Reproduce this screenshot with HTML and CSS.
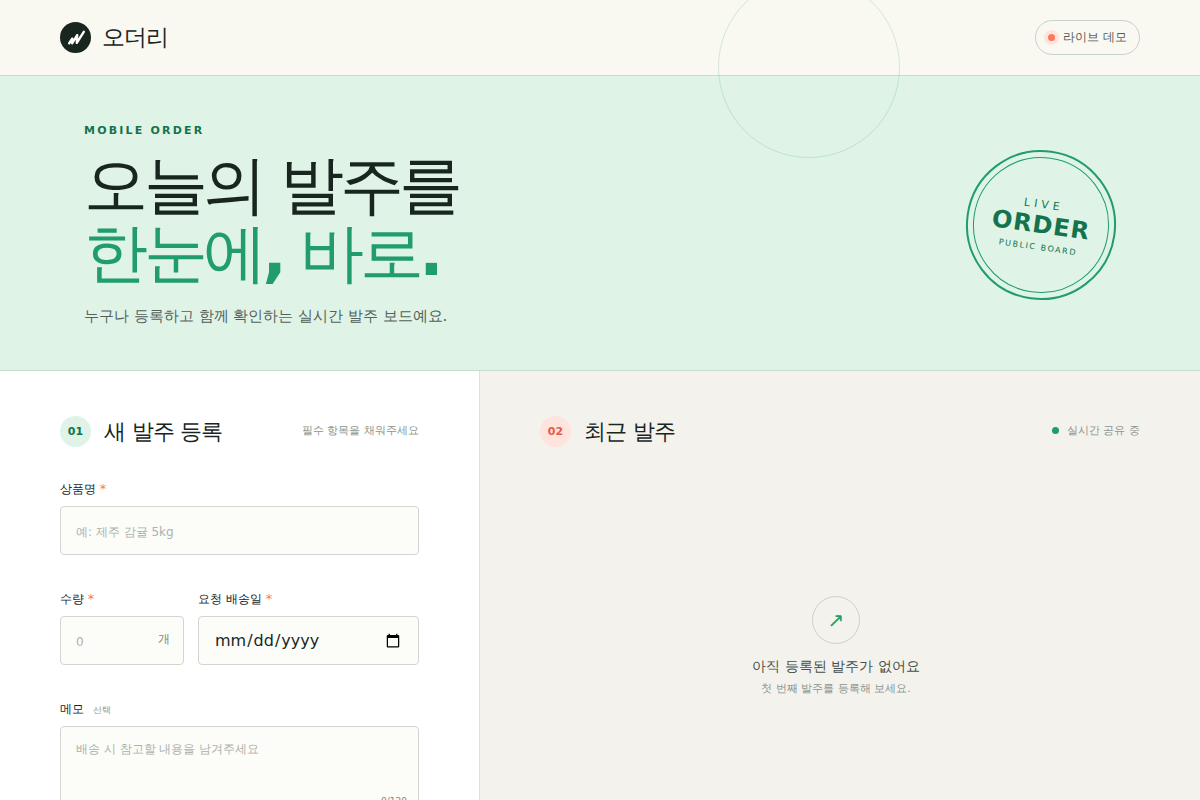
FILE: index.html
```html
<!doctype html>
<html lang="ko">
  <head>
    <meta charset="UTF-8" />
    <meta name="viewport" content="width=device-width, initial-scale=1.0" />
    <title>오더리</title>
    <link rel="stylesheet" href="styles.css">
  </head>
  <body>
    <header class="topbar">
      <a class="brand" href="#">
        <span class="brand-mark">
          <svg viewBox="0 0 31 31" aria-hidden="true">
            <path d="M9.200 21.200L12.200 16.800M12.200 21.200L17.200 13.200M12.200 16.800V21.200M17.200 13.200L16.800 20.800L23.800 9.800" />
          </svg>
        </span>
        <span class="brand-name">오더리</span>
      </a>
      <span class="live-pill"><i class="live-dot"></i>라이브 데모</span>
    </header>

    <section class="hero">
      <div class="hero-copy">
        <p class="eyebrow">MOBILE ORDER</p>
        <h1>오늘의 발주를<br /><em>한눈에, 바로.</em></h1>
        <p class="hero-text">누구나 등록하고 함께 확인하는 실시간 발주 보드예요.</p>
      </div>
      <div class="stamp">
        <span class="stamp-top">LIVE</span>
        <strong>ORDER</strong>
        <small>PUBLIC BOARD</small>
      </div>
    </section>

    <main class="workspace">
      <section class="panel form-panel">
        <div class="panel-head">
          <span class="step">01</span>
          <h2>새 발주 등록</h2>
          <p class="hint">필수 항목을 채워주세요</p>
        </div>
        <form>
          <div class="field">
            <label for="product">상품명 <b>*</b></label>
            <input type="text" id="product" placeholder="예: 제주 감귤 5kg" />
          </div>
          <div class="field-row">
            <div class="field">
              <label for="quantity">수량 <b>*</b></label>
              <div class="input-wrap">
                <input type="number" id="quantity" placeholder="0" />
                <span class="unit">개</span>
              </div>
            </div>
            <div class="field">
              <label for="date">요청 배송일 <b>*</b></label>
              <input type="date" id="date" />
            </div>
          </div>
          <div class="field">
            <label for="memo">메모 <small>선택</small></label>
            <div class="input-wrap">
              <textarea id="memo" maxlength="120" placeholder="배송 시 참고할 내용을 남겨주세요"></textarea>
              <span class="count">0/120</span>
            </div>
          </div>
        </form>
      </section>

      <section class="panel list-panel">
        <div class="panel-head">
          <span class="step step-coral">02</span>
          <h2>최근 발주</h2>
          <p class="sharing"><i></i>실시간 공유 중</p>
        </div>
        <div class="empty">
          <span class="empty-icon">↗</span>
          <strong>아직 등록된 발주가 없어요</strong>
          <p>첫 번째 발주를 등록해 보세요.</p>
        </div>
      </section>
    </main>
  </body>
</html>
```

FILE: styles.css
```css
:root {
  --ink: #18261f;
  --green: #209d6b;
  --deep: #14734d;
  --mint: #dff3e7;
  --coral: #ff765d;
  --line: #d0d6d0;
}

*,
*::before {
  box-sizing: border-box;
}

body {
  margin: 0;
  color: var(--ink);
  background: #f9f8f1;
  font-family: "DejaVu Sans", sans-serif;
  font-synthesis: none;
}

h1,
h2,
p {
  margin: 0;
}

.topbar {
  display: flex;
  align-items: center;
  justify-content: space-between;
  height: 76px;
  padding: 0 60px;
  border-bottom: 1px solid #cbdbd1;
}

.brand {
  display: flex;
  align-items: center;
  gap: 11px;
  color: inherit;
  text-decoration: none;
}

.brand-mark {
  width: 31px;
  height: 31px;
  border-radius: 50%;
  background: var(--ink);
}

.brand-mark svg {
  display: block;
  fill: none;
  stroke: #fff;
  stroke-width: 2.4;
  stroke-linecap: round;
  stroke-linejoin: round;
}

.brand-name {
  font-size: 23px;
  font-weight: 700;
  letter-spacing: -1px;
}

.live-pill {
  display: flex;
  align-items: center;
  gap: 8px;
  height: 35px;
  padding: 0 12px;
  border: 1px solid #c8d2ca;
  border-radius: 18px;
  color: #536159;
  font-size: 12px;
}

.live-dot {
  width: 7px;
  height: 7px;
  border-radius: 50%;
  background: var(--coral);
  box-shadow: 0 0 0 4px #fde5de;
}

.hero {
  position: relative;
  display: flex;
  align-items: center;
  justify-content: space-between;
  padding: 48px 84px 44px;
  background: var(--mint);
  border-bottom: 1px solid #c5dccf;
}

/* thin ring hanging over the header edge */
.hero::before {
  content: "";
  position: absolute;
  top: -100px;
  right: 25%;
  width: 182px;
  height: 182px;
  border: 1px solid rgba(32, 157, 107, 0.18);
  border-radius: 50%;
}

.eyebrow {
  color: var(--deep);
  font-size: 11px;
  font-weight: 700;
  letter-spacing: 0.2em;
}

h1 {
  margin: 14px 0 20px;
  font-size: 64px;
  line-height: 68px;
  letter-spacing: -0.07em;
}

h1 em {
  color: var(--green);
  font-style: normal;
}

.hero-text {
  color: #536159;
  font-size: 15px;
}

.stamp {
  position: relative;
  display: flex;
  flex-direction: column;
  align-items: center;
  justify-content: center;
  width: 150px;
  height: 150px;
  border: 2px solid var(--green);
  border-radius: 50%;
  color: var(--deep);
  transform: rotate(8deg);
}

.stamp::before {
  content: "";
  position: absolute;
  inset: 5px;
  border: 1px solid var(--green);
  border-radius: 50%;
}

.stamp-top {
  font-size: 11px;
  letter-spacing: 4px;
}

.stamp strong {
  font-size: 24px;
  line-height: 28px;
  letter-spacing: 1px;
}

.stamp small {
  margin-top: 4px;
  font-size: 8px;
  letter-spacing: 0.2em;
}

.workspace {
  display: grid;
  grid-template-columns: 2fr 3fr;
}

.panel {
  padding: 45px 60px;
}

.form-panel {
  background: #fff;
  border-right: 1px solid #dfe2dc;
}

.list-panel {
  display: flex;
  flex-direction: column;
  background: #f4f2ed;
}

.panel-head {
  display: flex;
  align-items: center;
  margin-bottom: 33px;
}

.step {
  display: grid;
  place-items: center;
  width: 31px;
  height: 31px;
  margin-right: 13px;
  border-radius: 50%;
  color: var(--deep);
  background: var(--mint);
  font-size: 11px;
  font-weight: 700;
}

.step-coral {
  color: #e65b46;
  background: #ffe4de;
}

h2 {
  font-size: 22px;
  font-weight: 700;
  letter-spacing: -1px;
}

.hint,
.sharing {
  margin-left: auto;
  padding-bottom: 3px;
  color: #8b958e;
  font-size: 11px;
}

.sharing {
  display: flex;
  align-items: center;
  gap: 8px;
}

.sharing i {
  width: 7px;
  height: 7px;
  border-radius: 50%;
  background: var(--green);
}

.field {
  margin-bottom: 35px;
}

.field-row {
  display: grid;
  grid-template-columns: 124px 1fr;
  gap: 14px;
}

label {
  display: block;
  margin-bottom: 8px;
  font-size: 12px;
  line-height: 18px;
}

label b {
  color: var(--coral);
  font-size: 13px;
  font-weight: 400;
  line-height: 1;
}

label small {
  margin-left: 5px;
  color: #929b95;
  font-size: 9px;
  line-height: 1;
}

input,
textarea {
  display: block;
  width: 100%;
  height: 49px;
  padding: 0 15px;
  border: 1px solid var(--line);
  border-radius: 4px;
  color: var(--ink);
  background: #fcfcf8;
  font-family: inherit;
  font-size: 16px;
}

textarea {
  height: 92px;
  padding: 14px 15px;
  resize: none;
}

input::placeholder,
textarea::placeholder {
  color: #acb2ad;
  font-size: 12px;
}

.input-wrap {
  position: relative;
}

.unit,
.count {
  position: absolute;
  right: 14px;
  color: #7d8881;
}

.unit {
  top: 15px;
  font-size: 12px;
}

.count {
  right: 12px;
  bottom: 12px;
  font-size: 9px;
}

.empty {
  display: flex;
  flex: 1;
  flex-direction: column;
  align-items: center;
  padding: 116px 8px 0 0;
}

.empty-icon {
  display: grid;
  place-items: center;
  width: 48px;
  height: 48px;
  border: 1px solid #ccd3cc;
  border-radius: 50%;
  color: var(--green);
  font-size: 20px;
}

.empty strong {
  margin-top: 14px;
  color: #435048;
  font-size: 14px;
  font-weight: 400;
}

.empty p {
  margin-top: 5px;
  color: #8b958e;
  font-size: 11px;
}
```
